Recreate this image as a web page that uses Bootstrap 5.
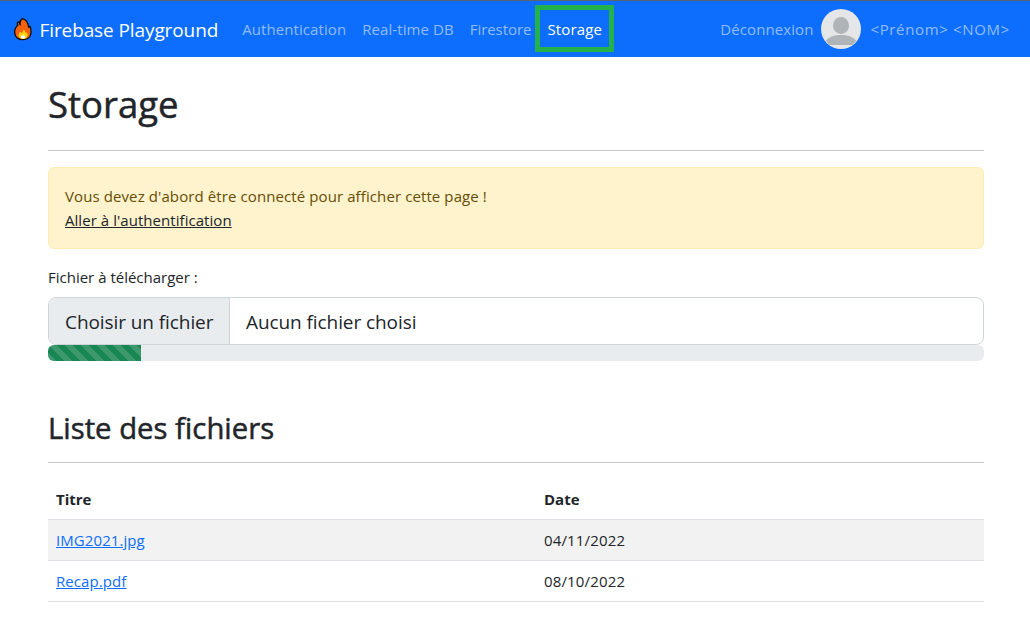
<!DOCTYPE html>
<html lang="fr">
<head>
<meta charset="utf-8">
<meta name="viewport" content="width=device-width, initial-scale=1">
<title>Firebase Playground</title>
<link href="https://cdn.jsdelivr.net/npm/bootstrap@5.3.0/dist/css/bootstrap.min.css" rel="stylesheet">
<style>
body { font-family: "Open Sans", "Noto Sans", sans-serif; font-size: 15px; line-height: 24px; color: #212529; overflow: hidden; }
.top-bar { height: 57px; border-top: 1px solid #5c636a; padding: 0 20px 0 12px; background: #0d6efd; }
.top-bar .navbar-brand { font-size: 19px; line-height: 30px; margin-right: 16px; letter-spacing: -.1px; }
.top-bar .navbar-brand svg { margin-right: 5.5px; }
.top-bar .brand-name { padding-top: 2px; }
.top-bar .nav-link { color: rgba(255,255,255,.55); padding: 8px; white-space: nowrap; letter-spacing: .08px; }
.top-bar .nav-link.store { letter-spacing: -.05px; }
.top-bar .nav-link.active { color: #fff; letter-spacing: .15px; }
.top-bar .nav-link.user-name { letter-spacing: .66px; padding-left: 9px; }
.marked { position: relative; }
.marked::after { content: ""; position: absolute; inset: -4px -4px -3px; border: 5px solid #22b14c; }
.page-body { padding: 23px 46px 0 48px; }
.page-body h1, .page-body h2 { -webkit-text-stroke: .5px #212529; }
.page-body h1 { font-size: 36.5px; line-height: 48px; margin: 0 0 22px; }
.page-body h2 { font-size: 29.3px; line-height: 38px; margin: 48px 0 15px; }
.page-body hr { margin: 0 0 16px; border-top: 1px solid #212529; opacity: .25; }
.page-body h2 + hr { margin-bottom: 15px; }
.notice { background: #fff3cd; border-color: #ffecb5; color: #664d03; letter-spacing: .1px; }
.notice a { letter-spacing: .05px; }
.picker { height: 48px; font-size: 19px; line-height: 30px; letter-spacing: -.08px; border: 1px solid #ced4da; border-radius: 8px; overflow: hidden; }
.picker > div { padding-top: 2px; }
.picker-btn { background: #e9ecef; border-right: 1px solid #ced4da; width: 181px; }
.upload { height: 16px; border-radius: 6px; background: #e9ecef; }
.files { --bs-table-striped-bg: #f2f2f2; border-color: #dee2e6; table-layout: fixed; }
.files th, .files td { height: 41px; }
.files td { letter-spacing: .15px; }
.files a { color: #0d6efd; letter-spacing: .08px; }
</style>
</head>
<body>
<nav class="top-bar d-flex align-items-center">
  <a class="navbar-brand d-flex align-items-center text-white text-decoration-none" href="#">
    <svg width="22" height="24" viewBox="0 0 22 24" aria-hidden="true">
      <path d="M10.4 1.6c-2.2 1.4-2.5 3.7-2.3 5.9C7.4 6.9 7.8 5.8 7.1 4.9c-1.6-.4-2.3 1.7-1.3 3.2C3.3 10.5 2.3 13 2.7 16.2c.5 3.8 3.7 6.500 8.100 6.500 4.500 0 7.900-2.600 8.200-7 .2-2-.1-4.200-.9-6.200-1-.2-1.300.4-1.600 1.100C16.400 6.500 14.500 2.700 10.400 1.600z" fill="#f7630c" stroke="#0b0b0b" stroke-width="1.3"/>
      <path d="M11.5 12.5c-.1 2-1 2.700-1.900 3.600-.5-.7-.9-1.200-1.500-1.300-3 3.900-1.200 7 2.800 7.100 4.500 0 6-4 3.300-7-.4.400-.6.900-.7 1.300-.3-1.500-.8-2.800-2-3.700z" fill="#ffd20a"/>
      <path d="M11.2 17.3l-.8 1.500-.9-.6c-1.300 2-.6 3.500 1.500 3.600 2.300 0 3-1.700 1.700-3.500l-.7.800c-.1-.8-.4-1.300-.8-1.800z" fill="#fff"/>
    </svg><span class="brand-name">Firebase Playground</span>
  </a>
  <a class="nav-link" href="#">Authentication</a>
  <a class="nav-link" href="#">Real-time DB</a>
  <a class="nav-link store" href="#">Firestore</a>
  <a class="nav-link active marked" href="#">Storage</a>
  <a class="nav-link ms-auto" href="#">Déconnexion</a>
  <svg width="40" height="40" viewBox="0 0 40 40" aria-hidden="true">
    <circle cx="20" cy="20" r="20" fill="#e4e6e7"/>
    <ellipse cx="20" cy="16.5" rx="8" ry="8.5" fill="#aeb4b7"/>
    <path d="M5 31.5c3.500-4 9-5.500 15-5.500s11.500 1.500 15 5.500c-1 2-2.500 3.500-4 4.500H9c-1.500-1-3-2.500-4-4.500z" fill="#aeb4b7"/>
  </svg>
  <span class="nav-link user-name pe-0">&lt;Prénom&gt; &lt;NOM&gt;</span>
</nav>
<main class="page-body">
  <h1>Storage</h1>
  <hr>
  <div class="alert notice mb-3">Vous devez d'abord être connecté pour afficher cette page !<br><a class="link-dark" href="#">Aller à l'authentification</a></div>
  <label class="d-block mb-2">Fichier à télécharger :</label>
  <div class="picker d-flex align-items-stretch">
    <div class="picker-btn d-flex align-items-center ps-3">Choisir un fichier</div>
    <div class="d-flex align-items-center ps-3">Aucun fichier choisi</div>
  </div>
  <div class="progress upload"><div class="progress-bar progress-bar-striped bg-success" style="width: 9.9%"></div></div>
  <h2>Liste des fichiers</h2>
  <hr>
  <table class="table table-striped files mb-0">
    <colgroup><col style="width: 52.14%"><col></colgroup>
    <thead><tr><th>Titre</th><th>Date</th></tr></thead>
    <tbody>
      <tr><td><a href="#">IMG2021.jpg</a></td><td>04/11/2022</td></tr>
      <tr><td><a href="#">Recap.pdf</a></td><td>08/10/2022</td></tr>
    </tbody>
  </table>
</main>
</body>
</html>
